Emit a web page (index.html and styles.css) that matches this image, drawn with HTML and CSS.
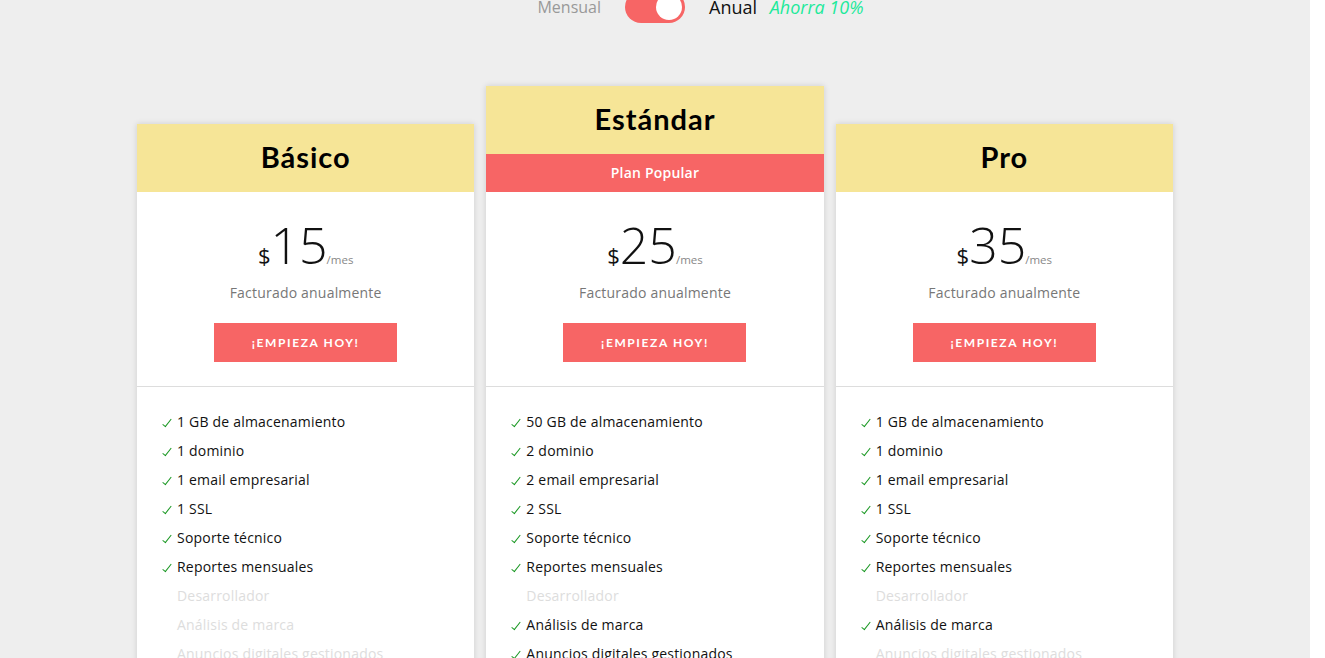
FILE: index.html
```
<!DOCTYPE html>
<html lang="es">
<head>
<meta charset="utf-8">
<title>Planes</title>
<link rel="stylesheet" href="styles.css">
</head>
<body>
<div class="page">
  <div class="switch-row">
    <span class="opt opt-month">Mensual</span>
    <span class="switch"><span class="knob"></span></span>
    <span class="opt opt-year">Anual <em class="save">Ahorra 10%</em></span>
  </div>

  <div class="plans">
    <div class="card">
      <div class="card-head">Básico</div>
      <div class="card-price">
        <div class="price"><span class="cur">$</span><span class="amount">15</span><span class="per">/mes</span></div>
        <div class="billing">Facturado anualmente</div>
        <a class="btn">¡EMPIEZA HOY!</a>
      </div>
      <ul class="features">
        <li class="on">1 GB de almacenamiento</li>
        <li class="on">1 dominio</li>
        <li class="on">1 email empresarial</li>
        <li class="on">1 SSL</li>
        <li class="on">Soporte técnico</li>
        <li class="on">Reportes mensuales</li>
        <li class="off">Desarrollador</li>
        <li class="off">Análisis de marca</li>
        <li class="off">Anuncios digitales gestionados</li>
      </ul>
    </div>

    <div class="card card-popular">
      <div class="card-head">Estándar</div>
      <div class="ribbon">Plan Popular</div>
      <div class="card-price">
        <div class="price"><span class="cur">$</span><span class="amount">25</span><span class="per">/mes</span></div>
        <div class="billing">Facturado anualmente</div>
        <a class="btn">¡EMPIEZA HOY!</a>
      </div>
      <ul class="features">
        <li class="on">50 GB de almacenamiento</li>
        <li class="on">2 dominio</li>
        <li class="on">2 email empresarial</li>
        <li class="on">2 SSL</li>
        <li class="on">Soporte técnico</li>
        <li class="on">Reportes mensuales</li>
        <li class="off">Desarrollador</li>
        <li class="on">Análisis de marca</li>
        <li class="on">Anuncios digitales gestionados</li>
      </ul>
    </div>

    <div class="card">
      <div class="card-head">Pro</div>
      <div class="card-price">
        <div class="price"><span class="cur">$</span><span class="amount">35</span><span class="per">/mes</span></div>
        <div class="billing">Facturado anualmente</div>
        <a class="btn">¡EMPIEZA HOY!</a>
      </div>
      <ul class="features">
        <li class="on">1 GB de almacenamiento</li>
        <li class="on">1 dominio</li>
        <li class="on">1 email empresarial</li>
        <li class="on">1 SSL</li>
        <li class="on">Soporte técnico</li>
        <li class="on">Reportes mensuales</li>
        <li class="off">Desarrollador</li>
        <li class="on">Análisis de marca</li>
        <li class="off">Anuncios digitales gestionados</li>
      </ul>
    </div>
  </div>
</div>
</body>
</html>
```
FILE: styles.css
```
html, body {
  margin: 0;
  padding: 0;
  background: #ffffff;
  overflow: hidden;
}

.page {
  width: 1310px;
  height: 658px;
  background: #eeeeee;
  font-family: "Open Sans", "Liberation Sans", sans-serif;
  color: #111;
  overflow: hidden;
}

.switch-row {
  display: grid;
  grid-template-columns: 1fr auto 1fr;
  align-items: center;
  column-gap: 24px;
  margin-top: -9px;
  height: 32px;
}

.opt {
  line-height: 22px;
}

.opt-month {
  justify-self: end;
  color: #999999;
  font-size: 16px;
}

.opt-year {
  justify-self: start;
  color: #111;
  font-size: 18px;
}

.save {
  color: #1de99a;
  margin-left: 8px;
}

.switch {
  display: flex;
  justify-content: flex-end;
  align-items: center;
  width: 60px;
  height: 32px;
  padding: 0 3px;
  box-sizing: border-box;
  border-radius: 16px;
  background: #f76565;
}

.knob {
  width: 26px;
  height: 26px;
  border-radius: 50%;
  background: #ffffff;
}

.plans {
  display: flex;
  align-items: flex-start;
  gap: 12px;
  width: 1036px;
  margin: 101px auto 0;
}

.card {
  flex: 1;
  background: #ffffff;
  box-shadow: 0 0 6px rgba(0, 0, 0, 0.14);
}

.card-popular {
  margin-top: -38px;
}

.card-head {
  height: 68px;
  box-sizing: border-box;
  padding-bottom: 2px;
  line-height: 66px;
  text-align: center;
  background: #f6e597;
  font-family: "Lato", "Liberation Sans", sans-serif;
  font-weight: 700;
  font-size: 29px;
  letter-spacing: 1px;
  color: #000;
}

.ribbon {
  height: 38px;
  line-height: 38px;
  text-align: center;
  background: #f76565;
  color: #ffffff;
  font-weight: 600;
  font-size: 14px;
  letter-spacing: 0.2px;
}

.card-price {
  display: flex;
  flex-direction: column;
  align-items: center;
  padding: 27px 0 24px;
  border-bottom: 1px solid #dddddd;
}

.price {
  display: flex;
  align-items: baseline;
  color: #111;
  height: 52px;
}

.cur {
  font-size: 22px;
  font-weight: 400;
  margin-right: 0;
}

.amount {
  font-size: 50px;
  font-weight: 300;
  line-height: 52px;
  margin-right: -1px;
}

.per {
  font-size: 11.5px;
  color: #888888;
}

.billing {
  margin-top: 12px;
  font-size: 14px;
  letter-spacing: 0.2px;
  color: #777777;
  line-height: 20px;
}

.btn {
  display: block;
  margin-top: 20px;
  width: 183px;
  height: 39px;
  line-height: 39px;
  text-align: center;
  background: #f76565;
  color: #ffffff;
  font-family: "Lato", "Liberation Sans", sans-serif;
  font-weight: 700;
  font-size: 12px;
  letter-spacing: 1.6px;
}

.features {
  list-style: none;
  margin: 0;
  padding: 20px 0 0 24px;
}

.features li {
  position: relative;
  padding-left: 16px;
  font-size: 14px;
  letter-spacing: 0.2px;
  line-height: 29px;
}

.features li.on {
  color: #111;
}

.features li.on::before {
  content: "";
  position: absolute;
  left: 4px;
  top: 10px;
  width: 3px;
  height: 9px;
  border-right: 1.2px solid #16961f;
  border-bottom: 1.2px solid #16961f;
  transform: rotate(38deg);
}

.features li.off {
  color: #dddddd;
}
```
